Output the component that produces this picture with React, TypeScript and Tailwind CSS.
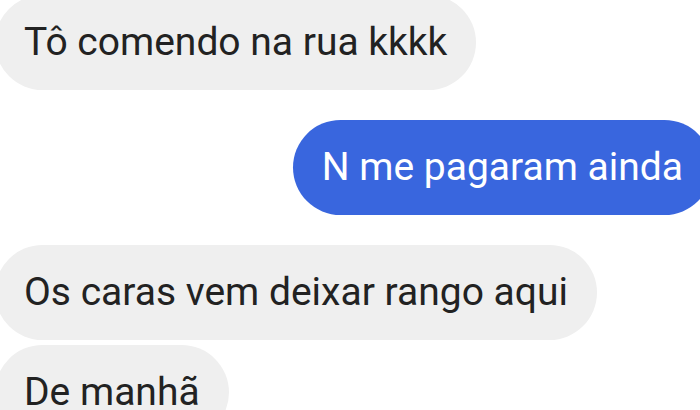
const font = { fontFamily: 'Roboto, "Noto Sans", sans-serif' };

function Bubble({ text, mine, className = "" }: { text: string; mine?: boolean; className?: string }) {
  return (
    <div
      className={`h-[95px] shrink-0 rounded-full flex items-center px-[29px] text-[39px] leading-none whitespace-nowrap ${
        mine ? "bg-[#3966de] text-white self-end" : "bg-[#efefef] text-[#222222] self-start"
      } ${className}`}
    >
      {text}
    </div>
  );
}

export default function App() {
  return (
    <div className="w-[700px] h-[410px] overflow-hidden bg-white" style={font}>
      <div className="flex flex-col -mt-[5px]">
        <Bubble text="Tô comendo na rua kkkk" className="-ml-[5px]" />
        <Bubble text="N me pagaram ainda" mine className="mt-[30px] -mr-[12px]" />
        <Bubble text="Os caras vem deixar rango aqui" className="mt-[30px] -ml-[5px]" />
        <Bubble text="De manhã" className="mt-[5px] -ml-[5px]" />
      </div>
    </div>
  );
}
